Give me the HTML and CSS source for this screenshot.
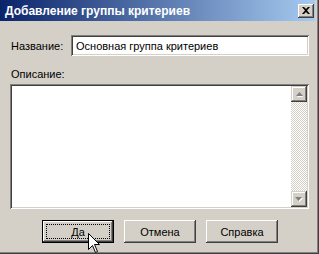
FILE: index.html
```html
<!DOCTYPE html>
<html lang="ru">
<head>
    <meta charset="UTF-8">
    <title>Добавление группы критериев</title>
    <link rel="stylesheet" href="styles.css">
</head>
<body>

    <div class="window">
        <div class="titlebar">
            <span class="title">Добавление группы критериев</span>
            <button class="close-btn">
                <svg width="8" height="7" viewBox="0 0 8 7">
                    <path d="M0 0h2l2 2 2-2h2L5 3.5 8 7H6L4 5 2 7H0l3-3.5z" fill="#000"/>
                </svg>
            </button>
        </div>

        <div class="content">
            <div class="name-row">
                <label class="field-label" for="group-name">Название:</label>
                <input class="edit" id="group-name" type="text" value="Основная группа критериев" readonly>
            </div>

            <div class="desc-label">Описание:</div>

            <div class="memo">
                <div class="memo-text"></div>
                <div class="scrollbar">
                    <div class="sb-btn">
                        <svg width="7" height="5" viewBox="0 0 7 5">
                            <path d="M4 1.5l3 3.5H1z" fill="#fff"/>
                            <path d="M3.5 0L7 4H0z" fill="#808080"/>
                        </svg>
                    </div>
                    <div class="sb-track"></div>
                    <div class="sb-btn">
                        <svg width="8" height="5" viewBox="0 0 8 5">
                            <path d="M1 1h7L4.5 5z" fill="#fff"/>
                            <path d="M0 0h7L3.5 4z" fill="#808080"/>
                        </svg>
                    </div>
                </div>
            </div>

            <div class="buttons">
                <button class="btn btn-default"><span class="focus-rect">Да</span></button>
                <button class="btn">Отмена</button>
                <button class="btn">Справка</button>
            </div>
        </div>

        <!-- mouse pointer over the OK button -->
        <svg class="cursor" width="12" height="20" viewBox="0 0 12 20">
            <path d="M0.5 0.5V16.5L4.5 12.5L7.5 19.5L9.5 18.5L6.5 11.5H11.5Z" fill="#fff" stroke="#000" stroke-width="1"/>
        </svg>
    </div>

</body>
</html>
```

FILE: styles.css
```css
body {
    margin: 0;
    padding: 0;
    background: #d4d0c8;
    font-family: 'Liberation Sans', Arial, sans-serif;
    font-size: 11px;
    color: #000;
}

.window {
    position: relative;
    width: 319px;
    height: 254px;
    box-sizing: border-box;
    background: #d4d0c8;
    border-right: 1px solid #404040;
    border-bottom: 1px solid #404040;
    box-shadow: inset -1px -1px #808080;
    padding: 0 3px 3px 0;
    display: flex;
    flex-direction: column;
    overflow: hidden;
}

.titlebar {
    height: 21px;
    flex: none;
    display: flex;
    align-items: center;
    justify-content: space-between;
    padding: 0 1px 0 5px;
    background: linear-gradient(to right, #0a246a, #a6caf0);
}

.title {
    color: #fff;
    font-weight: bold;
    font-size: 12px;
    white-space: nowrap;
}

.close-btn {
    width: 16px;
    height: 14px;
    padding: 0;
    border: none;
    background: #d4d0c8;
    box-shadow: inset -1px -1px #404040, inset 1px 1px #fff, inset -2px -2px #808080, inset 2px 2px #d4d0c8;
    display: flex;
    align-items: center;
    justify-content: center;
}

.close-btn svg {
    display: block;
    margin: 0 0 1px 0;
}

.content {
    flex: 1;
    display: flex;
    flex-direction: column;
    padding: 14px 6px 0 10px;
}

.name-row {
    display: flex;
    align-items: center;
    height: 21px;
}

.field-label {
    width: 61px;
    padding-left: 1px;
    box-sizing: border-box;
}

.edit {
    flex: 1;
    height: 21px;
    box-sizing: border-box;
    margin: 0;
    border: none;
    outline: none;
    padding: 0 3px 0 5px;
    background: #fff;
    font-family: 'Liberation Sans', Arial, sans-serif;
    font-size: 11px;
    color: #000;
    box-shadow: inset 1px 1px #808080, inset -1px -1px #fff, inset 2px 2px #404040, inset -2px -2px #d4d0c8;
}

.desc-label {
    margin-top: 12px;
    padding-left: 1px;
    line-height: 13px;
}

.memo {
    margin-top: 3px;
    height: 125px;
    box-sizing: border-box;
    padding: 2px;
    display: flex;
    background: #fff;
    box-shadow: inset 1px 1px #808080, inset -1px -1px #fff, inset 2px 2px #404040, inset -2px -2px #d4d0c8;
}

.memo-text {
    flex: 1;
}

.scrollbar {
    width: 16px;
    display: flex;
    flex-direction: column;
}

.sb-btn {
    height: 16px;
    flex: none;
    background: #d4d0c8;
    box-shadow: inset -1px -1px #404040, inset 1px 1px #d4d0c8, inset -2px -2px #808080, inset 2px 2px #fff;
    display: flex;
    align-items: center;
    justify-content: center;
}

.sb-btn svg {
    display: block;
}

.sb-track {
    flex: 1;
    background: repeating-conic-gradient(#d4d0c8 0 25%, #fff 0 50%) 0 0 / 2px 2px;
}

.buttons {
    display: flex;
    gap: 10px;
    margin-top: 11px;
    padding-left: 32px;
}

.btn {
    width: 72px;
    height: 23px;
    padding: 0;
    border: none;
    background: #d4d0c8;
    font-family: 'Liberation Sans', Arial, sans-serif;
    font-size: 11px;
    color: #000;
    box-shadow: inset -1px -1px #404040, inset 1px 1px #fff, inset -2px -2px #808080, inset 2px 2px #d4d0c8;
}

.btn-default {
    border: 1px solid #000;
    display: flex;
    align-items: stretch;
    padding: 3px;
}

.focus-rect {
    flex: 1;
    display: flex;
    align-items: center;
    justify-content: center;
    border: 1px dotted #000;
}

.cursor {
    position: absolute;
    left: 88px;
    top: 233px;
}
```
